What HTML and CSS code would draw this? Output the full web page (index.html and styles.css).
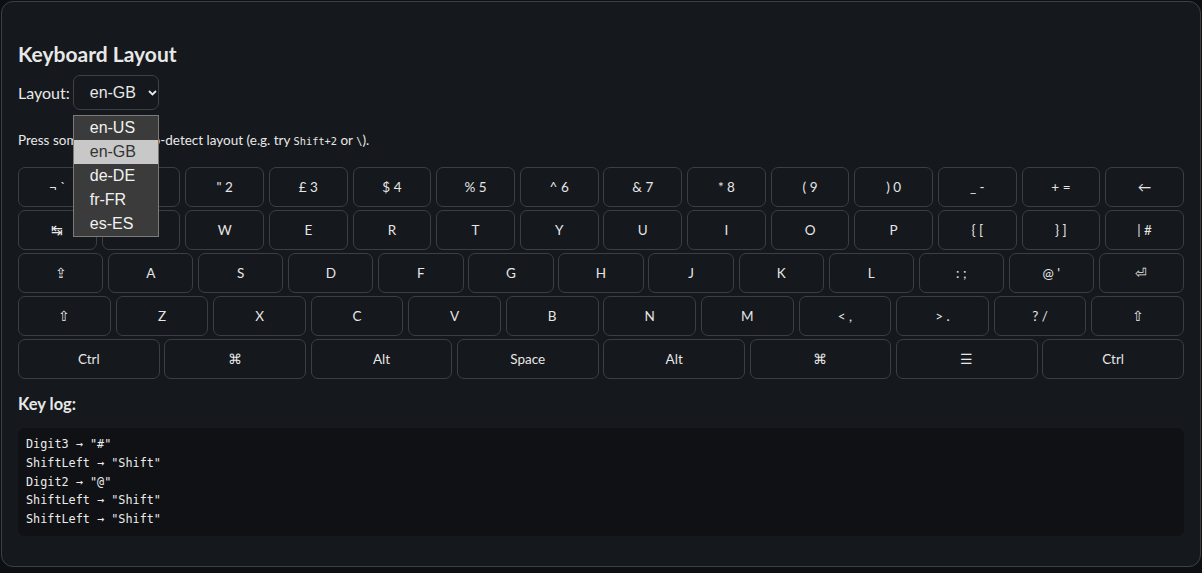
FILE: index.html
```html
<!DOCTYPE html>
<html lang="en">
<head>
<meta charset="utf-8">
<title>Keyboard Layout</title>
<link rel="stylesheet" href="styles.css">
</head>
<body>
<div class="card">
  <h2 class="title">Keyboard Layout</h2>
  <div class="layout-row">
    <span class="label">Layout:</span>
    <div class="picker">
      <div class="select">
        <span class="value">en-GB</span>
        <svg class="chev" width="9" height="6" viewBox="0 0 9 6"><path d="M1 1l3.5 3.5L8 1" fill="none" stroke="#e8e8e8" stroke-width="1.8"/></svg>
      </div>
      <ul class="listbox">
        <li>en-US</li>
        <li class="sel">en-GB</li>
        <li>de-DE</li>
        <li>fr-FR</li>
        <li>es-ES</li>
      </ul>
    </div>
  </div>
  <p class="hint">Press some keys to auto-detect layout (e.g. try <code>Shift+2</code> or <code>\</code>).</p>
  <div class="keyboard">
    <div class="row">
      <div class="key">¬ `</div><div class="key">! 1</div><div class="key">" 2</div><div class="key">£ 3</div><div class="key">$ 4</div><div class="key">% 5</div><div class="key">^ 6</div><div class="key">&amp; 7</div><div class="key">* 8</div><div class="key">( 9</div><div class="key">) 0</div><div class="key">_ -</div><div class="key">+ =</div><div class="key">←</div>
    </div>
    <div class="row">
      <div class="key">↹</div><div class="key">Q</div><div class="key">W</div><div class="key">E</div><div class="key">R</div><div class="key">T</div><div class="key">Y</div><div class="key">U</div><div class="key">I</div><div class="key">O</div><div class="key">P</div><div class="key">{ [</div><div class="key">} ]</div><div class="key">| #</div>
    </div>
    <div class="row">
      <div class="key">⇪</div><div class="key">A</div><div class="key">S</div><div class="key">D</div><div class="key">F</div><div class="key">G</div><div class="key">H</div><div class="key">J</div><div class="key">K</div><div class="key">L</div><div class="key">: ;</div><div class="key">@ '</div><div class="key">⏎</div>
    </div>
    <div class="row">
      <div class="key">⇧</div><div class="key">Z</div><div class="key">X</div><div class="key">C</div><div class="key">V</div><div class="key">B</div><div class="key">N</div><div class="key">M</div><div class="key">&lt; ,</div><div class="key">&gt; .</div><div class="key">? /</div><div class="key">⇧</div>
    </div>
    <div class="row">
      <div class="key">Ctrl</div><div class="key">⌘</div><div class="key">Alt</div><div class="key">Space</div><div class="key">Alt</div><div class="key">⌘</div><div class="key">☰</div><div class="key">Ctrl</div>
    </div>
  </div>
  <h3 class="log-title">Key log:</h3>
  <pre class="log">Digit3 → "#"
ShiftLeft → "Shift"
Digit2 → "@"
ShiftLeft → "Shift"
ShiftLeft → "Shift"</pre>
</div>
</body>
</html>
```
FILE: styles.css
```css
html, body {
  margin: 0;
  background: #0d1013;
}
body {
  padding: 1px;
  font-family: "Lato", "Noto Sans", sans-serif;
  color: #e8e8e8;
}
.card {
  border: 1px solid #3d4045;
  border-radius: 12px;
  background: #15181c;
  padding: 16px 16px 16px 16px;
}
.title {
  margin: 24px 0 0;
  font-size: 21px;
  line-height: 24px;
  font-weight: 700;
}
.layout-row {
  margin-top: 9px;
  display: flex;
  align-items: center;
  gap: 3px;
  font-size: 16px;
}
.label {
  white-space: nowrap;
}
.picker {
  position: relative;
  flex: none;
}
.select {
  box-sizing: border-box;
  width: 86px;
  height: 35px;
  border: 1px solid #3d4045;
  border-radius: 7px;
  display: flex;
  align-items: center;
  padding-left: 16px;
  gap: 12px;
  font-family: "Liberation Sans", Arial, sans-serif;
  font-size: 16px;
  color: #e8e8e8;
  white-space: nowrap;
}
.value {
  flex: none;
}
.chev {
  display: block;
  flex: none;
}
.listbox {
  position: absolute;
  left: 0;
  top: 40px;
  width: 86px;
  box-sizing: border-box;
  margin: 0;
  padding: 0;
  list-style: none;
  background: #3b3b3b;
  border: 1px solid #7a7a7a;
  font-family: "Liberation Sans", Arial, sans-serif;
  font-size: 16px;
  z-index: 5;
}
.listbox li {
  height: 24px;
  line-height: 24px;
  padding-left: 16px;
  color: #f2f2f2;
}
.listbox li.sel {
  background: #c8c8c8;
  color: #333;
}
.hint {
  margin: 21px 0 0;
  font-size: 13.5px;
  line-height: 18px;
}
.hint code {
  font-family: "DejaVu Sans Mono", monospace;
  font-size: 10.3px;
}
.keyboard {
  margin-top: 16.5px;
  display: flex;
  flex-direction: column;
  gap: 3px;
}
.row {
  display: flex;
  gap: 4.8px;
}
.key {
  flex: none;
  flex-grow: 1;
  flex-basis: 0;
  min-width: 0;
  height: 40px;
  box-sizing: border-box;
  border: 1px solid #3b3e43;
  border-radius: 7px;
  display: flex;
  align-items: center;
  justify-content: center;
  font-size: 13.5px;
  color: #e6e6e6;
}
.log-title {
  margin: 15px 0 0;
  font-size: 16.5px;
  line-height: 20px;
  font-weight: 700;
}
.log {
  margin: 14px 0 14px;
  background: #0f1115;
  border-radius: 7px;
  padding: 7.5px 8px;
  font-family: "DejaVu Sans Mono", monospace;
  font-size: 11.8px;
  line-height: 18.75px;
  color: #ececec;
}
```
